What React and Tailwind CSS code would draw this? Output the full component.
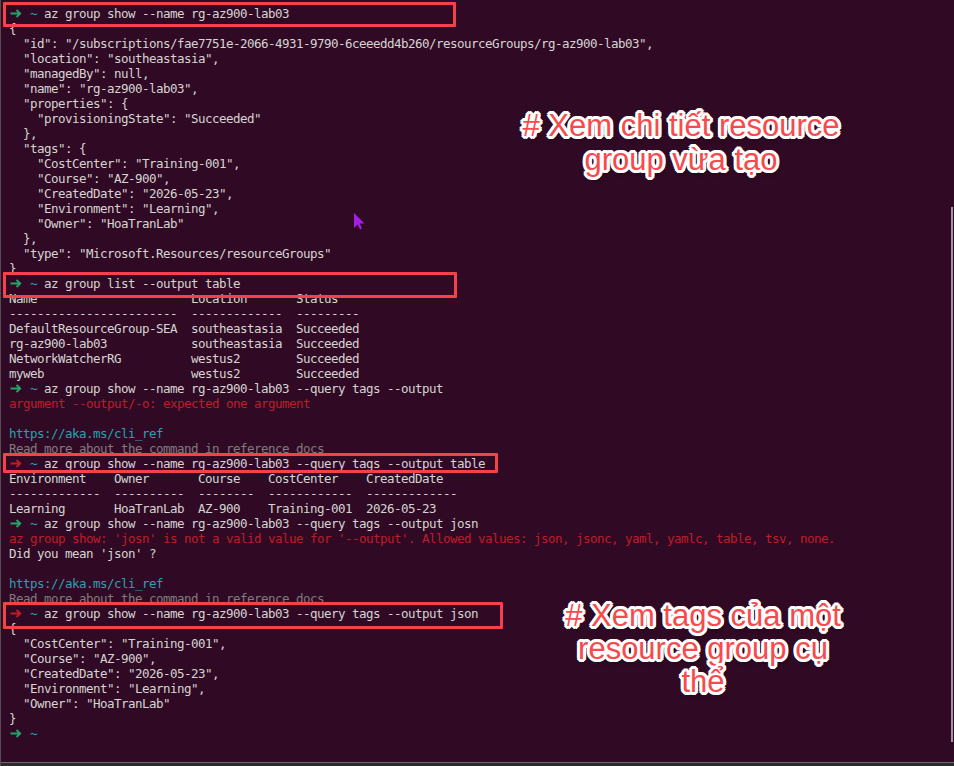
import React from 'react';

const FG = 'text-[#d6d4d2]';

const Arrow = ({ ok }) => (
  <span className="inline-block w-[21px] align-middle">
    <svg width="12" height="9" viewBox="0 0 12 9" className="ml-[1px] -mt-[2px]">
      <path
        d="M0.5 4.5H10M6.5 1L10.2 4.5L6.5 8"
        fill="none"
        stroke={ok ? '#26a269' : '#c01c28'}
        strokeWidth="1.9"
      />
    </svg>
  </span>
);

const Prompt = ({ ok = true, cmd = '' }) => (
  <div className="whitespace-pre h-[15px]">
    <Arrow ok={ok} />
    <span className="text-[#2aa1b3]">~</span>
    <span className={FG}> {cmd}</span>
  </div>
);

const L = ({ children, c = FG }) => (
  <div className={`whitespace-pre h-[15px] ${c}`}>{children || ' '}</div>
);

const RED = 'text-[#c01c28]';
const CYAN = 'text-[#2aa1b3]';
const GRAY = 'text-[#7f7a7e]';

const Box = ({ cls }) => (
  <div className={`absolute border-[3px] border-[#f5414a] rounded-[1px] ${cls}`} />
);

const outline =
  '[text-shadow:2px_0_0_#fff,-2px_0_0_#fff,0_2px_0_#fff,0_-2px_0_#fff,2px_2px_0_#fff,-2px_-2px_0_#fff,2px_-2px_0_#fff,-2px_2px_0_#fff,3px_1px_0_#fff,-3px_1px_0_#fff,1px_3px_0_#fff,1px_-3px_0_#fff,-1px_3px_0_#fff,-1px_-3px_0_#fff,3px_-1px_0_#fff,-3px_-1px_0_#fff,2px_4px_4px_rgba(0,0,0,0.45)]';

const Note = ({ cls, lh, lines }) => (
  <div
    className={`absolute -translate-x-1/2 text-center whitespace-nowrap text-[31px] text-[#f74a4c] font-['Liberation_Sans',Arial,sans-serif] ${lh} ${outline} ${cls}`}
  >
    {lines.map((t) => (
      <div key={t}>{t}</div>
    ))}
  </div>
);

export default function App() {
  return (
    <div className="relative w-[954px] h-[766px] overflow-hidden bg-[#300a24] border-l border-[#5a4a55]">
      <div className="pl-[8px] pt-[6px] font-['DejaVu_Sans_Mono',monospace] text-[12.5px] leading-[15px] tracking-[-0.525px]">
        <Prompt cmd="az group show --name rg-az900-lab03" />
        <L>{'{'}</L>
        <L>{'  "id": "/subscriptions/fae7751e-2066-4931-9790-6ceeedd4b260/resourceGroups/rg-az900-lab03",'}</L>
        <L>{'  "location": "southeastasia",'}</L>
        <L>{'  "managedBy": null,'}</L>
        <L>{'  "name": "rg-az900-lab03",'}</L>
        <L>{'  "properties": {'}</L>
        <L>{'    "provisioningState": "Succeeded"'}</L>
        <L>{'  },'}</L>
        <L>{'  "tags": {'}</L>
        <L>{'    "CostCenter": "Training-001",'}</L>
        <L>{'    "Course": "AZ-900",'}</L>
        <L>{'    "CreatedDate": "2026-05-23",'}</L>
        <L>{'    "Environment": "Learning",'}</L>
        <L>{'    "Owner": "HoaTranLab"'}</L>
        <L>{'  },'}</L>
        <L>{'  "type": "Microsoft.Resources/resourceGroups"'}</L>
        <L>{'}'}</L>
        <Prompt cmd="az group list --output table" />
        <L>{'Name                      Location       Status'}</L>
        <L>{'------------------------  -------------  ---------'}</L>
        <L>{'DefaultResourceGroup-SEA  southeastasia  Succeeded'}</L>
        <L>{'rg-az900-lab03            southeastasia  Succeeded'}</L>
        <L>{'NetworkWatcherRG          westus2        Succeeded'}</L>
        <L>{'myweb                     westus2        Succeeded'}</L>
        <Prompt cmd="az group show --name rg-az900-lab03 --query tags --output" />
        <L c={RED}>argument --output/-o: expected one argument</L>
        <L />
        <L c={CYAN}>https://aka.ms/cli_ref</L>
        <L c={GRAY}>Read more about the command in reference docs</L>
        <Prompt ok={false} cmd="az group show --name rg-az900-lab03 --query tags --output table" />
        <L>{'Environment    Owner       Course    CostCenter    CreatedDate'}</L>
        <L>{'-------------  ----------  --------  ------------  -------------'}</L>
        <L>{'Learning       HoaTranLab  AZ-900    Training-001  2026-05-23'}</L>
        <Prompt cmd="az group show --name rg-az900-lab03 --query tags --output josn" />
        <L c={RED}>
          {"az group show: 'josn' is not a valid value for '--output'. Allowed values: json, jsonc, yaml, yamlc, table, tsv, none."}
        </L>
        <L>{"Did you mean 'json' ?"}</L>
        <L />
        <L c={CYAN}>https://aka.ms/cli_ref</L>
        <L c={GRAY}>Read more about the command in reference docs</L>
        <Prompt ok={false} cmd="az group show --name rg-az900-lab03 --query tags --output json" />
        <L>{'{'}</L>
        <L>{'  "CostCenter": "Training-001",'}</L>
        <L>{'  "Course": "AZ-900",'}</L>
        <L>{'  "CreatedDate": "2026-05-23",'}</L>
        <L>{'  "Environment": "Learning",'}</L>
        <L>{'  "Owner": "HoaTranLab"'}</L>
        <L>{'}'}</L>
        <Prompt />
      </div>

      {/* highlight boxes */}
      <Box cls="left-[2px] top-[2px] w-[453px] h-[25px]" />
      <Box cls="left-[2px] top-[272px] w-[454px] h-[26px]" />
      <Box cls="left-[2px] top-[453px] w-[495px] h-[20px]" />
      <Box cls="left-[2px] top-[602px] w-[500px] h-[27px]" />

      {/* annotations */}
      <Note cls="left-[680px] top-[109px]" lh="leading-[34px]" lines={['# Xem chi tiết resource', 'group vừa tạo']} />
      <Note
        cls="left-[702px] top-[599px]"
        lh="leading-[33px]"
        lines={['# Xem tags của một', 'resource group cụ', 'thể']}
      />

      {/* mouse pointer */}
      <svg className="absolute left-[353px] top-[213px]" width="11" height="17" viewBox="0 0 11 17">
        <path d="M0 0V15L3.6 11.4L6 16.5L8 15.6L5.7 10.6H10.5Z" fill="#a41fe3" />
      </svg>

      {/* scrollbar thumb */}
      <div className="absolute right-[1px] top-[207px] w-[2px] h-[535px] bg-[#a3949f]" />

      {/* bottom edge */}
      <div className="absolute left-0 right-0 bottom-0 h-[4px] bg-[#2b2b2b] border-t border-[#6a6a6a]" />
    </div>
  );
}
